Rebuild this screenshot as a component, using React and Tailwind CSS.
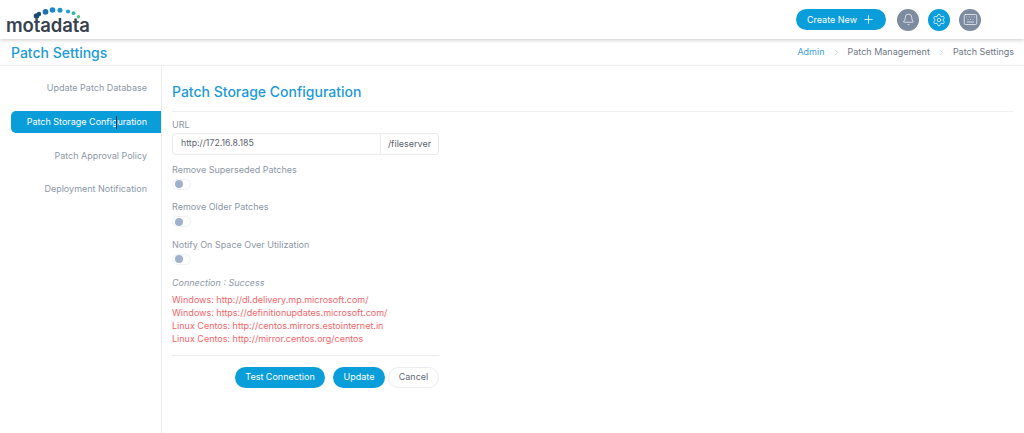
import React from "react";
import { Plus, Bell, Settings, Keyboard, ChevronRight } from "lucide-react";

const font = "font-['Inter','Noto_Sans',sans-serif]";

function Logo() {
  return (
    <div className="relative w-[90px] h-[39px] ml-[6px]">
      {/* dots arc above the wordmark */}
      <svg className="absolute left-0 top-0" width="90" height="39" viewBox="0 0 90 39">
        <circle cx="30.5" cy="16" r="2.8" fill="#1d4a72" />
        <circle cx="33" cy="14" r="2.2" fill="#1d4a72" />
        <circle cx="39.5" cy="11.8" r="2.9" fill="#1f6fb0" />
        <circle cx="46.5" cy="10" r="2.8" fill="#1b86c8" />
        <circle cx="54" cy="10.3" r="2.5" fill="#1c93d1" />
        <circle cx="62" cy="11.5" r="2.1" fill="#25a0d0" />
        <circle cx="67.5" cy="13.2" r="1.9" fill="#2fb5b0" />
        <circle cx="72.5" cy="16.7" r="1.7" fill="#4ccb7a" />
      </svg>
      <span className="absolute left-0 top-[14px] text-[18.5px] leading-[22px] font-semibold tracking-[-0.1px] text-[#37424f]">
        motadata
      </span>
    </div>
  );
}

function RoundIcon({ bg, children }) {
  return (
    <div className={`w-[22px] h-[22px] rounded-full flex items-center justify-center text-white ${bg}`}>
      {children}
    </div>
  );
}

function NavItem({ label, active }) {
  return active ? (
    <div className="h-[22px] ml-[11px] rounded-l-[5px] bg-[#099dd9] text-white text-[9px] flex items-center justify-end pr-[14px] relative">
      {label}
      {/* text cursor from the capture */}
      <span className="absolute left-[105px] top-[5px] w-px h-[13px] bg-[#24343f]" />
    </div>
  ) : (
    <div className="h-[22px] text-[#8d98a8] text-[9px] flex items-center justify-end pr-[14px]">{label}</div>
  );
}

function Toggle({ label }) {
  return (
    <div>
      <div className="text-[9px] leading-[14px] text-[#8c97a6]">{label}</div>
      <div className="mt-[2px] w-[19px] h-[11px] rounded-full border border-[#eef1f5] bg-white flex items-center pl-[2px]">
        <div className="w-[8px] h-[8px] rounded-full bg-[#9fb1cc]" />
      </div>
    </div>
  );
}

export default function App() {
  return (
    <div className={`${font} w-[1024px] h-[433px] bg-white overflow-hidden flex flex-col`}>
      <header className="h-[39px] shrink-0 flex items-center justify-between bg-white shadow-[0_1px_4px_rgba(0,0,0,0.22)] relative">
        <Logo />
        <div className="flex items-center mr-[43px]">
          <button className="w-[90px] h-[21px] rounded-full bg-[#099dd9] text-white text-[9px] flex items-center justify-center gap-[5px]">
            Create New <Plus size={13} strokeWidth={1.5} />
          </button>
          <div className="flex items-center gap-[9px] ml-[11px]">
            <RoundIcon bg="bg-[#7c8ba0]"><Bell size={13} strokeWidth={1.3} /></RoundIcon>
            <RoundIcon bg="bg-[#099dd9]"><Settings size={14} strokeWidth={1.3} /></RoundIcon>
            <RoundIcon bg="bg-[#7c8ba0]"><Keyboard size={15} strokeWidth={1.1} /></RoundIcon>
          </div>
        </div>
      </header>

      <div className="h-[27px] shrink-0 flex items-center justify-between border-b border-[#eceef4] pl-[11px] pr-[10px]">
        <h1 className="text-[14px] font-medium text-[#1b9ad6]">Patch Settings</h1>
        <nav className="flex items-center text-[9px] text-[#6f7785]">
          <span className="text-[#3d9edb]">Admin</span>
          <ChevronRight size={9} className="mx-[7px] text-[#b9c3d1]" />
          <span>Patch Management</span>
          <ChevronRight size={9} className="mx-[7px] text-[#b9c3d1]" />
          <span>Patch Settings</span>
        </nav>
      </div>

      <div className="flex flex-1 min-h-0">
        <aside className="w-[162px] shrink-0 border-r border-[#e9ecf1] pt-[11px] flex flex-col gap-[11.7px]">
          <NavItem label="Update Patch Database" />
          <NavItem label="Patch Storage Configuration" active />
          <NavItem label="Patch Approval Policy" />
          <NavItem label="Deployment Notification" />
        </aside>

        <main className="flex-1 pl-[10px] pr-[10px]">
          <h2 className="pt-[16px] h-[46px] text-[14px] leading-[20px] font-medium text-[#1b9ad6] border-b border-[#eceef2]">
            Patch Storage Configuration
          </h2>

          <div className="w-[267px]">
            <div className="mt-[6px] text-[9px] leading-[14px] text-[#8c97a6]">URL</div>
            <div className="mt-[1px] flex h-[22px] text-[9px] text-[#5c6470]">
              <div className="w-[209px] rounded-l-[4px] border border-[#e8ecf2] flex items-center pl-[8px] text-[8.75px]">
                http://172.16.8.185
              </div>
              <div className="flex-1 rounded-r-[4px] border border-l-0 border-[#e8ecf2] flex items-center justify-center">
                /fileserver
              </div>
            </div>

            <div className="mt-[7.5px] flex flex-col gap-[10.5px]">
              <Toggle label="Remove Superseded Patches" />
              <Toggle label="Remove Older Patches" />
              <Toggle label="Notify On Space Over Utilization" />
            </div>

            <div className="mt-[11px] text-[9px] leading-[14px] italic text-[#8c97a6]">Connection : Success</div>
            <div className="mt-[3px] text-[9px] leading-[13px] text-[#f0666b]">
              <div>Windows: http://dl.delivery.mp.microsoft.com/</div>
              <div>Windows: https://definitionupdates.microsoft.com/</div>
              <div>Linux Centos: http://centos.mirrors.estointernet.in</div>
              <div>Linux Centos: http://mirror.centos.org/centos</div>
            </div>

            <div className="mt-[10px] pt-[11px] border-t border-[#e8ebf0] flex justify-end items-center text-[9px]">
              <button className="w-[90px] h-[21px] rounded-full bg-[#099dd9] text-white">Test Connection</button>
              <button className="ml-[8px] w-[52px] h-[21px] rounded-full bg-[#099dd9] text-white">Update</button>
              <button className="ml-[3px] w-[51px] h-[21px] rounded-full border border-[#e8ebf0] text-[#5f6875]">Cancel</button>
            </div>
          </div>
        </main>
      </div>
    </div>
  );
}
